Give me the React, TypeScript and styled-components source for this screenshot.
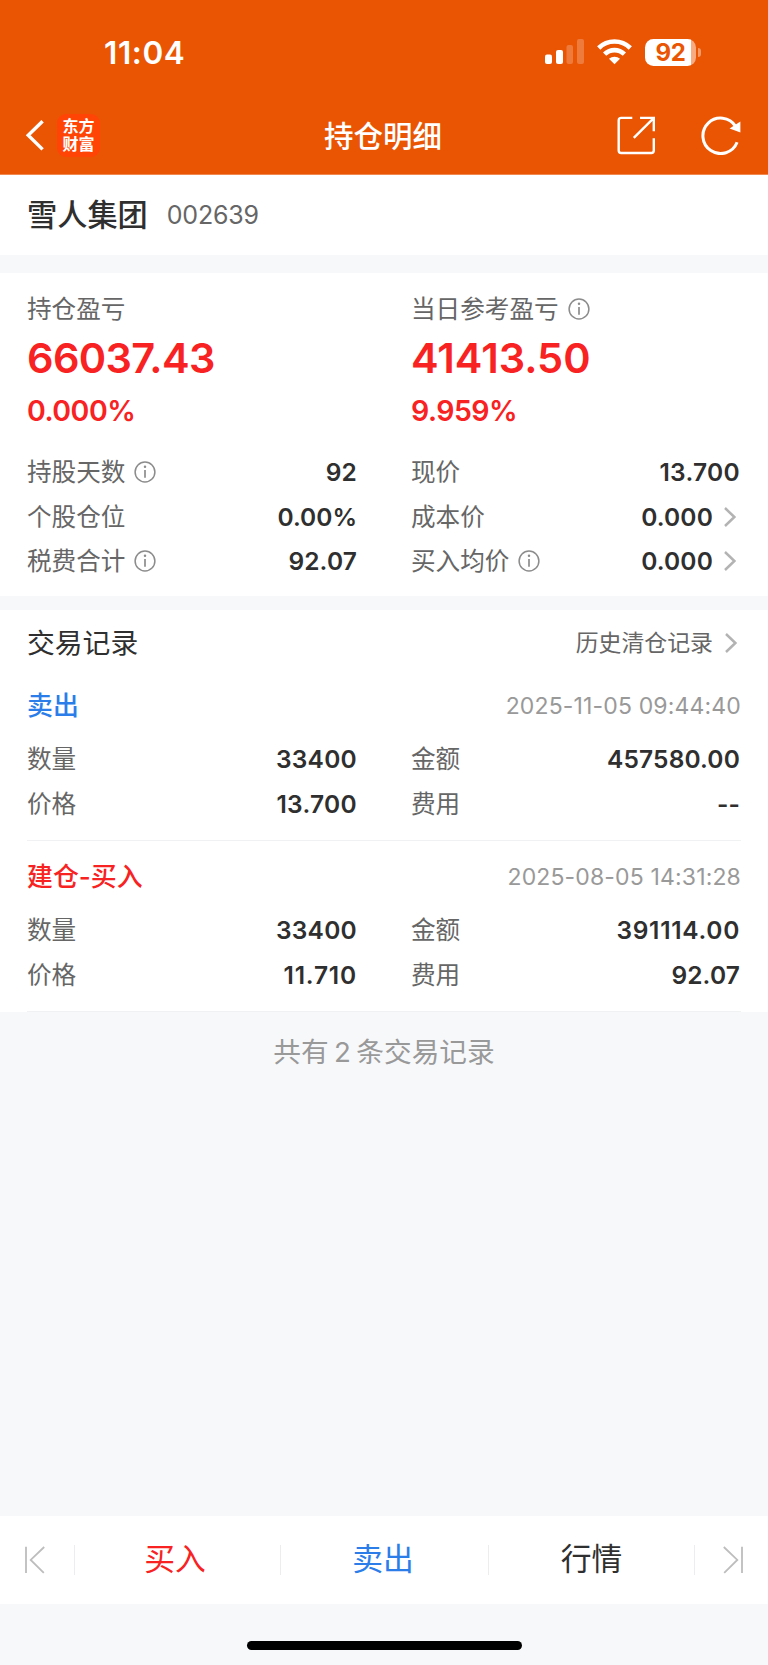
import React from 'react';
import styled, { createGlobalStyle } from 'styled-components';

const GlobalStyle = createGlobalStyle`
  *, *::before, *::after { box-sizing: border-box; }
  body {
    margin: 0;
    background: #f7f8fa;
    font-family: Inter, "Noto Sans CJK SC", sans-serif;
    color: #2f2f2f;
  }
`;

const Screen = styled.div`
  display: flex;
  flex-direction: column;
  width: 768px;
  height: 1665px;
  background: #f7f8fa;
  overflow: hidden;
`;

const Header = styled.header`
  height: 175px;
  background: #ea5504;
  border-bottom: 1px solid #f0884f;
  color: #fff;
`;

const StatusBar = styled.div`
  display: flex;
  align-items: center;
  justify-content: space-between;
  height: 96px;
  padding: 8px 67px 0 104px;
`;

const Clock = styled.span`
  font-size: 31.5px;
  font-weight: 600;
  letter-spacing: 0.6px;
`;

const StatusIcons = styled.div`
  display: flex;
  align-items: center;
  gap: 13px;
`;

const BatteryWrap = styled.div`
  display: flex;
  align-items: center;
  gap: 2px;
`;

const Battery = styled.div`
  display: flex;
  align-items: center;
  justify-content: center;
  width: 51px;
  height: 27px;
  border-radius: 8.5px;
  background: linear-gradient(to right, #fff 46px, #f8ab80 46px);
  color: #ea5504;
  font-size: 24px;
  font-weight: 700;
  letter-spacing: -0.3px;
`;

const BatteryCap = styled.i`
  width: 3px;
  height: 9px;
  border-radius: 0 4px 4px 0;
  background: #f39a68;
`;

const NavBar = styled.div`
  display: grid;
  grid-template-columns: 1fr auto 1fr;
  align-items: center;
  height: 78px;
  padding: 0 26px 0 25px;
`;

const NavLeft = styled.div`
  display: flex;
  align-items: center;
  gap: 13px;
`;

const NavRight = styled.div`
  display: flex;
  align-items: center;
  justify-content: flex-end;
  gap: 45px;
`;

const Title = styled.h1`
  margin: 0;
  padding: 1px 1px 0 0;
  font-size: 29.5px;
  font-weight: 500;
  line-height: 40px;
`;

const Logo = styled.div`
  display: flex;
  flex-direction: column;
  align-items: center;
  justify-content: center;
  width: 43px;
  height: 43px;
  padding-top: 1px;
  border-radius: 9px;
  background: #ff4405;
  font-size: 16px;
  line-height: 17.5px;
  font-weight: 700;
`;

const StockBar = styled.section`
  display: flex;
  align-items: center;
  gap: 19px;
  height: 80px;
  padding: 0 27px;
  background: #fff;
`;

const StockName = styled.span`
  font-size: 30.2px;
  font-weight: 500;
  line-height: 40px;
`;

const StockCode = styled.span`
  font-size: 25px;
  letter-spacing: -0.2px;
  color: #666;
`;

const Gap = styled.div<{ $h: number }>`
  height: ${(p) => p.$h}px;
`;

const Summary = styled.section`
  height: 323px;
  padding: 18px 27px 0;
  background: #fff;
`;

const Columns = styled.div`
  display: grid;
  grid-template-columns: 330px 329px;
  column-gap: 54px;
`;

const Profit = styled.div`
  display: flex;
  flex-direction: column;
  height: 159px;
  color: #f82222;
`;

const Label = styled.span`
  display: flex;
  align-items: center;
  gap: 9px;
  font-size: 24.6px;
  line-height: 36px;
  color: #666;
`;

const Amount = styled.strong<{ $track?: number }>`
  margin-top: 6px;
  font-size: 41.5px;
  line-height: 50px;
  font-weight: 600;
  letter-spacing: ${(p) => p.$track ?? 0}px;
`;

const Percent = styled.strong`
  margin-top: 10px;
  font-size: 28.5px;
  line-height: 36px;
  font-weight: 600;
  letter-spacing: -0.5px;
`;

const Row = styled.div`
  display: flex;
  align-items: center;
  justify-content: space-between;
  height: 44.6px;
`;

const Value = styled.span<{ $track?: number }>`
  display: flex;
  align-items: center;
  gap: 9px;
  font-size: 24.5px;
  font-weight: 600;
  letter-spacing: ${(p) => p.$track ?? 0.15}px;
`;

const Records = styled.section`
  height: 402px;
  background: #fff;
  padding: 0 27px;
`;

const RecordsHead = styled.div`
  display: flex;
  align-items: center;
  justify-content: space-between;
  height: 66px;
`;

const RecordsTitle = styled.h2`
  margin: 0;
  font-size: 27.8px;
  font-weight: 400;
  line-height: 40px;
`;

const HistoryLink = styled.a`
  display: flex;
  align-items: center;
  gap: 10px;
  font-size: 22.9px;
  line-height: 36px;
  color: #666;
`;

const Trade = styled.article<{ $h: number; $top: number }>`
  height: ${(p) => p.$h}px;
  padding-top: ${(p) => p.$top}px;
  border-bottom: 1px solid #f0f1f3;
`;

const TradeHead = styled.div`
  display: flex;
  align-items: center;
  justify-content: space-between;
  height: 42px;
  margin-bottom: 10px;
`;

const Side = styled.span<{ $color: string }>`
  font-size: 25.9px;
  font-weight: 500;
  line-height: 40px;
  color: ${(p) => p.$color};
`;

const Time = styled.time`
  font-size: 23px;
  letter-spacing: 0.15px;
  color: #999;
`;

const Total = styled.p`
  margin: 0;
  padding-top: 20px;
  text-align: center;
  font-size: 27.7px;
  line-height: 40px;
  word-spacing: -2.4px;
  color: #999;
`;

const Spacer = styled.div`
  flex: 1;
`;

const ActionBar = styled.nav`
  display: grid;
  grid-template-columns: 74px 206px 208px 206px 74px;
  align-items: center;
  height: 88px;
  background: #fff;
`;

const Action = styled.button<{ $color: string; $shift?: number }>`
  height: 30px;
  border: 0;
  border-left: 1px solid #ededf0;
  padding: 0 ${(p) => p.$shift ?? 0}px 2px 0;
  background: none;
  color: ${(p) => p.$color};
  font: 400 30.8px/28px Inter, "Noto Sans CJK SC", sans-serif;
`;

const Step = styled.button<{ $end?: boolean }>`
  display: flex;
  align-items: center;
  justify-content: ${(p) => (p.$end ? 'flex-end' : 'flex-start')};
  height: 30px;
  padding: 0 25px;
  border: 0;
  border-left: ${(p) => (p.$end ? '1px solid #ededf0' : '0')};
  background: none;
`;

const HomeArea = styled.footer`
  display: flex;
  justify-content: center;
  height: 61px;
  padding-top: 37px;
`;

const HomeIndicator = styled.div`
  width: 275px;
  height: 9px;
  border-radius: 5px;
  background: #000;
`;

const BackIcon = () => (
  <svg width="19" height="31" viewBox="0 0 19 31" fill="none" stroke="#fff" strokeWidth="3.4">
    <path d="M17.6 1.2 3.2 15.3 17.6 29.4" />
  </svg>
);

const SignalIcon = () => (
  <svg width="39" height="26" viewBox="0 0 39 26" fill="#fff">
    <rect x="0" y="15.5" width="7" height="9.5" rx="2" />
    <rect x="11" y="11" width="7" height="14" rx="2" />
    <rect x="21.5" y="6" width="6.5" height="19" rx="2" opacity=".22" />
    <rect x="32" y="0" width="7" height="25" rx="2" opacity=".22" />
  </svg>
);

const WifiIcon = () => (
  <svg width="35" height="26" viewBox="0 0 35 26" fill="none" stroke="#fff" strokeWidth="4.6">
    <path d="M1.7 9C10.5.4 24.5.4 33.3 9" />
    <path d="M7.6 15.2C13.2 9.8 21.8 9.8 27.4 15.2" />
    <path d="M17.5 25.2 12 19.8C15 17 20 17 23 19.8Z" fill="#fff" stroke="none" />
  </svg>
);

const ShareIcon = () => (
  <svg width="39" height="39" viewBox="0 0 39 39" fill="none" stroke="#fff" strokeWidth="2.4">
    <path d="M15.3 1.9H4.2A2.5 2.5 0 0 0 1.7 4.4V34.5A2.5 2.5 0 0 0 4.2 37H34.3A2.5 2.5 0 0 0 36.8 34.5V22.3" />
    <path d="M23 1.9H36.8V15.3M36.4 2.3 16.8 21.9" />
  </svg>
);

const RefreshIcon = () => (
  <svg width="41" height="39" viewBox="0 0 41 39" fill="none">
    <path d="M36.1 26.3A17.7 17.7 0 1 1 34.6 10.4" stroke="#fff" strokeWidth="3" />
    <path d="M28.6 12.6 39.4 5.4V16.6Z" fill="#fff" />
  </svg>
);

const InfoIcon = () => (
  <svg width="22" height="22" viewBox="0 0 22 22" fill="none" stroke="#8c8c8c" strokeWidth="1.5">
    <circle cx="11" cy="11" r="9.9" />
    <path d="M11 8.9V16.8" strokeWidth="1.7" />
    <circle cx="11" cy="5.8" r="1.25" fill="#8c8c8c" stroke="none" />
  </svg>
);

const ChevronIcon = () => (
  <svg width="18" height="20" viewBox="0 0 18 20" fill="none" stroke="#b3b3b3" strokeWidth="2.5">
    <path d="M3 1 12.4 10 3 19" />
  </svg>
);

const StepIcon = ({ flip }: { flip?: boolean }) => (
  <svg width="20" height="28" viewBox="0 0 20 28" fill="none" stroke="#bdbdbd" strokeWidth="1.8" transform={flip ? 'scale(-1,1)' : undefined}>
    <path d="M1 .7V27M19.2 1 5.7 13.9 18.8 26.8" />
  </svg>
);

type Field = { label: string; value: string; info?: boolean; link?: boolean; track?: number };

const summaryFields: Field[] = [
  { label: '持股天数', value: '92', info: true },
  { label: '现价', value: '13.700', track: 0.3 },
  { label: '个股仓位', value: '0.00%', track: 0 },
  { label: '成本价', value: '0.000', link: true },
  { label: '税费合计', value: '92.07', info: true },
  { label: '买入均价', value: '0.000', info: true, link: true },
];

const trades = [
  {
    side: '卖出', color: '#2b7de9', time: '2025-11-05 09:44:40', height: 165, top: 9,
    fields: [
      { label: '数量', value: '33400', track: 0.25 },
      { label: '金额', value: '457580.00' },
      { label: '价格', value: '13.700', track: 0.3 },
      { label: '费用', value: '--' },
    ],
  },
  {
    side: '建仓-买入', color: '#f82222', time: '2025-08-05 14:31:28', height: 171, top: 15,
    fields: [
      { label: '数量', value: '33400', track: 0.25 },
      { label: '金额', value: '391114.00', track: 0.7 },
      { label: '价格', value: '11.710', track: 0.8 },
      { label: '费用', value: '92.07' },
    ],
  },
];

const Fields = ({ items }: { items: Field[] }) => (
  <Columns>
    {items.map((f) => (
      <Row key={f.label}>
        <Label>{f.label}{f.info && <InfoIcon />}</Label>
        <Value $track={f.track}>{f.value}{f.link && <ChevronIcon />}</Value>
      </Row>
    ))}
  </Columns>
);

export default function App() {
  return (
    <Screen>
      <GlobalStyle />
      <Header>
        <StatusBar>
          <Clock>11:04</Clock>
          <StatusIcons>
            <SignalIcon />
            <WifiIcon />
            <BatteryWrap>
              <Battery>92</Battery>
              <BatteryCap />
            </BatteryWrap>
          </StatusIcons>
        </StatusBar>
        <NavBar>
          <NavLeft>
            <BackIcon />
            <Logo><span>东方</span><span>财富</span></Logo>
          </NavLeft>
          <Title>持仓明细</Title>
          <NavRight>
            <ShareIcon />
            <RefreshIcon />
          </NavRight>
        </NavBar>
      </Header>
      <StockBar>
        <StockName>雪人集团</StockName>
        <StockCode>002639</StockCode>
      </StockBar>
      <Gap $h={18} />
      <Summary>
        <Columns>
          <Profit>
            <Label>持仓盈亏</Label>
            <Amount $track={-0.65}>66037.43</Amount>
            <Percent>0.000%</Percent>
          </Profit>
          <Profit>
            <Label>当日参考盈亏<InfoIcon /></Label>
            <Amount>41413.50</Amount>
            <Percent>9.959%</Percent>
          </Profit>
        </Columns>
        <Fields items={summaryFields} />
      </Summary>
      <Gap $h={14} />
      <Records>
        <RecordsHead>
          <RecordsTitle>交易记录</RecordsTitle>
          <HistoryLink>历史清仓记录<ChevronIcon /></HistoryLink>
        </RecordsHead>
        {trades.map((t) => (
          <Trade key={t.time} $h={t.height} $top={t.top}>
            <TradeHead>
              <Side $color={t.color}>{t.side}</Side>
              <Time>{t.time}</Time>
            </TradeHead>
            <Fields items={t.fields} />
          </Trade>
        ))}
      </Records>
      <Total>共有 2 条交易记录</Total>
      <Spacer />
      <ActionBar>
        <Step><StepIcon /></Step>
        <Action $color="#f82222" $shift={5}>买入</Action>
        <Action $color="#2b7de9" $shift={3}>卖出</Action>
        <Action $color="#2f2f2f">行情</Action>
        <Step $end><StepIcon flip /></Step>
      </ActionBar>
      <HomeArea><HomeIndicator /></HomeArea>
    </Screen>
  );
}
